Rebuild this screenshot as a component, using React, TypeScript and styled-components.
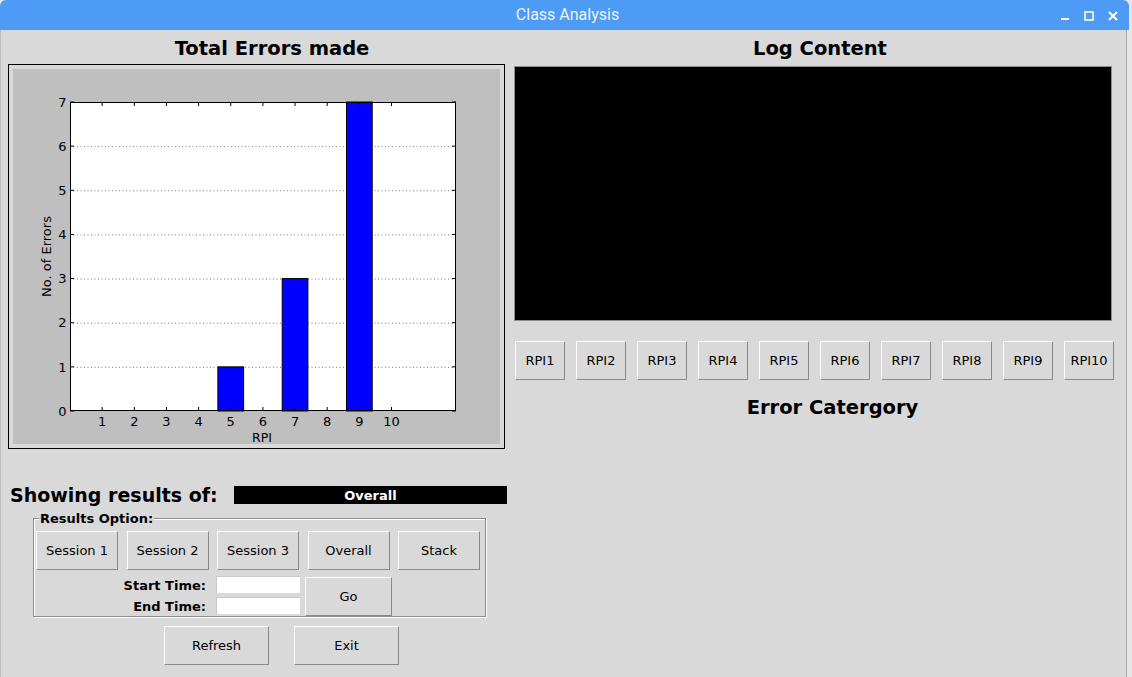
import React from "react";
import styled, { createGlobalStyle } from "styled-components";

const GlobalStyle = createGlobalStyle`
  * { box-sizing: border-box; }
  html, body { margin: 0; padding: 0; }
  body {
    background: #e6e6e6;
    font-family: "DejaVu Sans", "Liberation Sans", sans-serif;
    overflow: hidden;
  }
`;

const Window = styled.div`
  width: 1132px;
  height: 677px;
  display: flex;
  flex-direction: column;
  background: #e6e6e6;
`;

const TitleBar = styled.div`
  height: 30px;
  width: 1129px;
  flex-shrink: 0;
  background: #4d9bf5;
  border-radius: 6px 6px 0 0;
  display: grid;
  grid-template-columns: 1fr auto 1fr;
  align-items: center;
`;

const Title = styled.div`
  grid-column: 2;
  font-family: Roboto, "Liberation Sans", sans-serif;
  font-size: 16px;
  color: #eaf2fd;
  padding-left: 6px;
  line-height: 30px;
`;

const Controls = styled.div`
  grid-column: 3;
  justify-self: end;
  display: flex;
  align-items: center;
  gap: 14px;
  padding-top: 2px;
  padding-right: 11px;
`;

const Body = styled.div`
  flex: 1;
  width: 1127px;
  background: #d9d9d9;
  border-right: 1px solid #a9a9a9;
  box-shadow: inset 1px 0 0 #bcbcbc;
  display: flex;
  padding-top: 4px;
`;

const LeftColumn = styled.div`
  width: 514px;
  padding-left: 8px;
  display: flex;
  flex-direction: column;
`;

const RightColumn = styled.div`
  flex: 1;
  display: flex;
  flex-direction: column;
`;

const Heading = styled.div<{ $shift?: number }>`
  height: 30px;
  line-height: 30px;
  font-size: 19.5px;
  font-weight: bold;
  color: #000;
  text-align: center;
  padding-left: ${(p) => p.$shift ?? 0}px;
`;

const ChartFrame = styled.div`
  width: 497px;
  border: 1px solid #000;
  padding: 4px;
  line-height: 0;
`;

const ResultRow = styled.div`
  display: flex;
  align-items: center;
  height: 22px;
  margin-top: 35px;
  padding-left: 2px;
`;

const ResultLabel = styled.div`
  width: 224px;
  flex-shrink: 0;
  font-size: 19px;
  font-weight: bold;
  color: #000;
  line-height: 22px;
`;

const ResultValue = styled.div`
  width: 273px;
  height: 18px;
  background: #000;
  color: #fff;
  font-size: 13px;
  font-weight: bold;
  text-align: center;
  line-height: 19px;
`;

const OptionsFrame = styled.div`
  position: relative;
  margin-top: 12px;
  margin-left: 25px;
  width: 453px;
  border: 1px solid #8c8c8c;
  box-shadow: inset 1px 1px 0 #ffffff, 1px 1px 0 #ffffff;
  padding: 12px 2px 0 2px;
  height: 99px;
`;

const Legend = styled.span`
  position: absolute;
  top: -9px;
  left: 5px;
  padding: 0 1px;
  background: #d9d9d9;
  font-size: 13px;
  font-weight: bold;
  line-height: 17px;
  color: #000;
`;

const ButtonRow = styled.div<{ $gap: number }>`
  display: flex;
  gap: ${(p) => p.$gap}px;
`;

const TkButton = styled.button<{ $w: number; $h?: number }>`
  width: ${(p) => p.$w}px;
  height: ${(p) => p.$h ?? 39}px;
  flex-shrink: 0;
  margin: 0;
  padding: 0;
  background: #d9d9d9;
  border-style: solid;
  border-width: 1px;
  border-color: #ffffff #8a8a8a #8a8a8a #ffffff;
  font-family: "DejaVu Sans", "Liberation Sans", sans-serif;
  font-size: 13px;
  color: #000;
  text-align: center;
  cursor: default;
`;

const TimeRow = styled.div`
  display: flex;
  margin-top: 6px;
`;

const TimeLabels = styled.div`
  width: 172px;
  display: flex;
  flex-direction: column;
  text-align: right;
  padding-right: 2px;
`;

const TimeLabel = styled.div`
  height: 21px;
  line-height: 20px;
  font-size: 13px;
  font-weight: bold;
  color: #000;
`;

const TimeEntries = styled.div`
  margin-left: 8px;
  display: flex;
  flex-direction: column;
  gap: 4px;
`;

const Entry = styled.div`
  width: 84px;
  height: 17px;
  background: #ffffff;
  border-top: 1px solid #c8c8c8;
  border-left: 1px solid #c8c8c8;
`;

const GoSlot = styled.div`
  margin-left: 5px;
  margin-top: 1px;
`;

const BottomRow = styled.div`
  display: flex;
  gap: 25px;
  margin-top: 9px;
  padding-left: 156px;
`;

const LogBox = styled.div`
  width: 598px;
  height: 255px;
  margin-top: 2px;
  background: #000;
  border: 1px solid #8c8c8c;
`;

const RpiRow = styled.div`
  display: flex;
  gap: 11px;
  margin-top: 20px;
  padding-left: 1px;
`;

const ErrorHeading = styled(Heading)`
  margin-top: 13px;
`;

/* ---------- chart ---------- */
const W = 487;
const H = 375;
const PX = 57;
const PY = 33;
const PW = 386;
const PH = 309;
const XU = 32.15;
const YU = PH / 7;
const FONT = "DejaVu Sans, sans-serif";

const data: { x: number; v: number }[] = [
  { x: 5, v: 1 },
  { x: 7, v: 3 },
  { x: 9, v: 7 },
];

const ErrorChart: React.FC = () => {
  const xs = Array.from({ length: 10 }, (_, i) => i + 1);
  const ys = Array.from({ length: 8 }, (_, i) => i);
  const tx = (i: number) => PX + i * XU;
  const ty = (v: number) => PY + PH - v * YU;
  return (
    <svg width={W} height={H} viewBox={`0 0 ${W} ${H}`} style={{ display: "block" }}>
      <rect x={0} y={0} width={W} height={H} fill="#bfbfbf" />
      <rect x={PX} y={PY} width={PW} height={PH} fill="#ffffff" />
      {ys.slice(1, 7).map((v) => (
        <line
          key={`g${v}`}
          x1={PX}
          x2={PX + PW}
          y1={ty(v) + 0.5}
          y2={ty(v) + 0.5}
          stroke="#7a7a7a"
          strokeWidth={1}
          strokeDasharray="1 2.5"
        />
      ))}
      {data.map((d) => (
        <rect
          key={`b${d.x}`}
          x={tx(d.x) - 0.4 * XU}
          y={ty(d.v)}
          width={0.8 * XU}
          height={d.v * YU}
          fill="#0000ff"
          stroke="#000"
          strokeWidth={1}
        />
      ))}
      <rect x={PX + 0.5} y={PY + 0.5} width={PW - 1} height={PH - 1} fill="none" stroke="#000" strokeWidth={1} />
      {xs.map((i) => (
        <g key={`xt${i}`}>
          <line x1={tx(i)} x2={tx(i)} y1={PY + PH} y2={PY + PH - 4} stroke="#000" strokeWidth={1} />
          <line x1={tx(i)} x2={tx(i)} y1={PY} y2={PY + 4} stroke="#000" strokeWidth={1} />
          <text x={tx(i)} y={356.5} textAnchor="middle" fontFamily={FONT} fontSize={13} fill="#000">
            {i}
          </text>
        </g>
      ))}
      {ys.map((v) => (
        <g key={`yt${v}`}>
          <line x1={PX} x2={PX + 4} y1={ty(v)} y2={ty(v)} stroke="#000" strokeWidth={1} />
          <line x1={PX + PW} x2={PX + PW - 4} y1={ty(v)} y2={ty(v)} stroke="#000" strokeWidth={1} />
          <text x={53.5} y={ty(v) + 4.7} textAnchor="end" fontFamily={FONT} fontSize={13} fill="#000">
            {v}
          </text>
        </g>
      ))}
      <text x={PX + PW / 2 - 1} y={373} textAnchor="middle" fontFamily={FONT} fontSize={12.5} fill="#000">
        RPI
      </text>
      <text
        transform={`translate(37.7, ${PY + PH / 2}) rotate(-90)`}
        textAnchor="middle"
        fontFamily={FONT}
        fontSize={13}
        fill="#000"
      >
        No. of Errors
      </text>
    </svg>
  );
};

const WindowControls: React.FC = () => (
  <Controls>
    <svg width="10" height="10" viewBox="0 0 10 10">
      <rect x="1" y="7" width="8" height="2" fill="#ffffff" />
    </svg>
    <svg width="10" height="10" viewBox="0 0 10 10">
      <rect x="1" y="1" width="8" height="8" fill="none" stroke="#ffffff" strokeWidth="1.6" />
    </svg>
    <svg width="10" height="10" viewBox="0 0 10 10">
      <path d="M1 1 L9 9 M9 1 L1 9" stroke="#ffffff" strokeWidth="2" />
    </svg>
  </Controls>
);

const sessions = ["Session 1", "Session 2", "Session 3", "Overall", "Stack"];
const rpis = Array.from({ length: 10 }, (_, i) => `RPI${i + 1}`);

export default function App() {
  return (
    <>
      <GlobalStyle />
      <Window>
        <TitleBar>
          <Title>Class Analysis</Title>
          <WindowControls />
        </TitleBar>
        <Body>
          <LeftColumn>
            <Heading $shift={22}>Total Errors made</Heading>
            <ChartFrame>
              <ErrorChart />
            </ChartFrame>
            <ResultRow>
              <ResultLabel>Showing results of:</ResultLabel>
              <ResultValue>Overall</ResultValue>
            </ResultRow>
            <OptionsFrame>
              <Legend>Results Option:</Legend>
              <ButtonRow $gap={8.5}>
                {sessions.map((s) => (
                  <TkButton key={s} $w={82}>
                    {s}
                  </TkButton>
                ))}
              </ButtonRow>
              <TimeRow>
                <TimeLabels>
                  <TimeLabel>Start Time:</TimeLabel>
                  <TimeLabel>End Time:</TimeLabel>
                </TimeLabels>
                <TimeEntries>
                  <Entry />
                  <Entry />
                </TimeEntries>
                <GoSlot>
                  <TkButton $w={87}>Go</TkButton>
                </GoSlot>
              </TimeRow>
            </OptionsFrame>
            <BottomRow>
              <TkButton $w={105}>Refresh</TkButton>
              <TkButton $w={105}>Exit</TkButton>
            </BottomRow>
          </LeftColumn>
          <RightColumn>
            <Heading>Log Content</Heading>
            <LogBox />
            <RpiRow>
              {rpis.map((r) => (
                <TkButton key={r} $w={50}>
                  {r}
                </TkButton>
              ))}
            </RpiRow>
            <ErrorHeading $shift={25}>Error Catergory</ErrorHeading>
          </RightColumn>
        </Body>
      </Window>
    </>
  );
}
